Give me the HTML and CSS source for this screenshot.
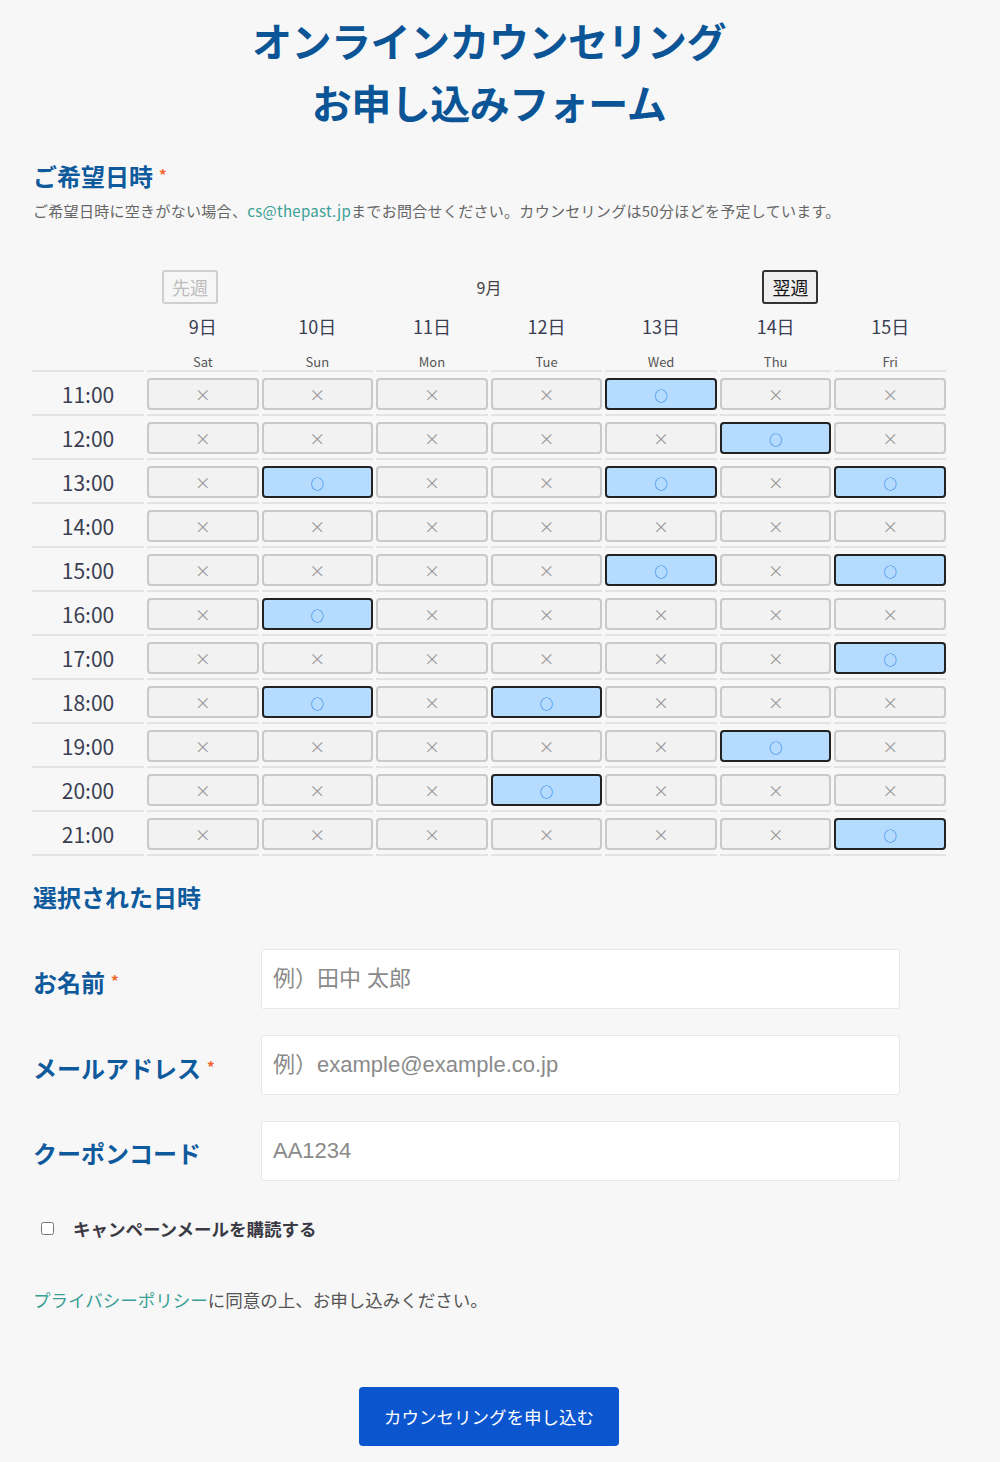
FILE: index.html
```html
<!DOCTYPE html>
<html lang="ja">
<head>
<meta charset="utf-8">
<title>オンラインカウンセリング お申し込みフォーム</title>
<link rel="stylesheet" href="styles.css">
</head>
<body>
<div class="page">
  <h1 class="title">オンラインカウンセリング<br>お申し込みフォーム</h1>

  <h2 class="section-title">ご希望日時<span class="req">*</span></h2>
  <p class="desc">ご希望日時に空きがない場合、<a class="link" href="#">cs@thepast.jp</a>までお問合せください。カウンセリングは50分ほどを予定しています。</p>

  <div class="cal">
    <div class="nav">
      <button class="nav-btn prev" disabled>先週</button>
      <span class="month">9月</span>
      <button class="nav-btn next">翌週</button>
    </div>

    <div class="blank"></div>
    <div class="date">9日</div><div class="date">10日</div><div class="date">11日</div><div class="date">12日</div><div class="date">13日</div><div class="date">14日</div><div class="date">15日</div>

    <div class="wd blank-wd"></div>
    <div class="wd">Sat</div><div class="wd">Sun</div><div class="wd">Mon</div><div class="wd">Tue</div><div class="wd">Wed</div><div class="wd">Thu</div><div class="wd">Fri</div>

    <div class="time">11:00</div>
    <div class="slot"><button class="s no">×</button></div>
    <div class="slot"><button class="s no">×</button></div>
    <div class="slot"><button class="s no">×</button></div>
    <div class="slot"><button class="s no">×</button></div>
    <div class="slot"><button class="s ok">○</button></div>
    <div class="slot"><button class="s no">×</button></div>
    <div class="slot"><button class="s no">×</button></div>

    <div class="time">12:00</div>
    <div class="slot"><button class="s no">×</button></div>
    <div class="slot"><button class="s no">×</button></div>
    <div class="slot"><button class="s no">×</button></div>
    <div class="slot"><button class="s no">×</button></div>
    <div class="slot"><button class="s no">×</button></div>
    <div class="slot"><button class="s ok">○</button></div>
    <div class="slot"><button class="s no">×</button></div>

    <div class="time">13:00</div>
    <div class="slot"><button class="s no">×</button></div>
    <div class="slot"><button class="s ok">○</button></div>
    <div class="slot"><button class="s no">×</button></div>
    <div class="slot"><button class="s no">×</button></div>
    <div class="slot"><button class="s ok">○</button></div>
    <div class="slot"><button class="s no">×</button></div>
    <div class="slot"><button class="s ok">○</button></div>

    <div class="time">14:00</div>
    <div class="slot"><button class="s no">×</button></div>
    <div class="slot"><button class="s no">×</button></div>
    <div class="slot"><button class="s no">×</button></div>
    <div class="slot"><button class="s no">×</button></div>
    <div class="slot"><button class="s no">×</button></div>
    <div class="slot"><button class="s no">×</button></div>
    <div class="slot"><button class="s no">×</button></div>

    <div class="time">15:00</div>
    <div class="slot"><button class="s no">×</button></div>
    <div class="slot"><button class="s no">×</button></div>
    <div class="slot"><button class="s no">×</button></div>
    <div class="slot"><button class="s no">×</button></div>
    <div class="slot"><button class="s ok">○</button></div>
    <div class="slot"><button class="s no">×</button></div>
    <div class="slot"><button class="s ok">○</button></div>

    <div class="time">16:00</div>
    <div class="slot"><button class="s no">×</button></div>
    <div class="slot"><button class="s ok">○</button></div>
    <div class="slot"><button class="s no">×</button></div>
    <div class="slot"><button class="s no">×</button></div>
    <div class="slot"><button class="s no">×</button></div>
    <div class="slot"><button class="s no">×</button></div>
    <div class="slot"><button class="s no">×</button></div>

    <div class="time">17:00</div>
    <div class="slot"><button class="s no">×</button></div>
    <div class="slot"><button class="s no">×</button></div>
    <div class="slot"><button class="s no">×</button></div>
    <div class="slot"><button class="s no">×</button></div>
    <div class="slot"><button class="s no">×</button></div>
    <div class="slot"><button class="s no">×</button></div>
    <div class="slot"><button class="s ok">○</button></div>

    <div class="time">18:00</div>
    <div class="slot"><button class="s no">×</button></div>
    <div class="slot"><button class="s ok">○</button></div>
    <div class="slot"><button class="s no">×</button></div>
    <div class="slot"><button class="s ok">○</button></div>
    <div class="slot"><button class="s no">×</button></div>
    <div class="slot"><button class="s no">×</button></div>
    <div class="slot"><button class="s no">×</button></div>

    <div class="time">19:00</div>
    <div class="slot"><button class="s no">×</button></div>
    <div class="slot"><button class="s no">×</button></div>
    <div class="slot"><button class="s no">×</button></div>
    <div class="slot"><button class="s no">×</button></div>
    <div class="slot"><button class="s no">×</button></div>
    <div class="slot"><button class="s ok">○</button></div>
    <div class="slot"><button class="s no">×</button></div>

    <div class="time">20:00</div>
    <div class="slot"><button class="s no">×</button></div>
    <div class="slot"><button class="s no">×</button></div>
    <div class="slot"><button class="s no">×</button></div>
    <div class="slot"><button class="s ok">○</button></div>
    <div class="slot"><button class="s no">×</button></div>
    <div class="slot"><button class="s no">×</button></div>
    <div class="slot"><button class="s no">×</button></div>

    <div class="time">21:00</div>
    <div class="slot"><button class="s no">×</button></div>
    <div class="slot"><button class="s no">×</button></div>
    <div class="slot"><button class="s no">×</button></div>
    <div class="slot"><button class="s no">×</button></div>
    <div class="slot"><button class="s no">×</button></div>
    <div class="slot"><button class="s no">×</button></div>
    <div class="slot"><button class="s ok">○</button></div>
  </div>

  <h2 class="section-title selected">選択された日時</h2>

  <div class="form">
    <div class="row">
      <label class="label">お名前<span class="req">*</span></label>
      <input class="input" type="text" placeholder="例）田中 太郎">
    </div>
    <div class="row">
      <label class="label">メールアドレス<span class="req">*</span></label>
      <input class="input" type="text" placeholder="例）example@example.co.jp">
    </div>
    <div class="row">
      <label class="label">クーポンコード</label>
      <input class="input" type="text" placeholder="AA1234">
    </div>
  </div>

  <label class="check"><input type="checkbox" class="cb"><span class="check-text">キャンペーンメールを購読する</span></label>

  <p class="privacy"><a class="link" href="#">プライバシーポリシー</a>に同意の上、お申し込みください。</p>

  <div class="submit-wrap">
    <button class="submit">カウンセリングを申し込む</button>
  </div>
</div>
</body>
</html>
```

FILE: styles.css
```css
* { box-sizing: border-box; }

html, body {
  margin: 0;
  padding: 0;
  background: #f7f7f7;
}

body {
  font-family: "Noto Sans CJK JP", "Noto Sans", sans-serif;
  color: #333;
}

.page {
  width: 914px;
  margin-left: 32px;
  padding-top: 9px;
  padding-bottom: 17px;
}

.title {
  margin: 0;
  text-align: center;
  font-size: 40px;
  line-height: 62px;
  font-weight: 700;
  color: #0b5597;
  letter-spacing: -0.5px;
}

.section-title {
  margin: 24px 0 0 1px;
  font-size: 24px;
  line-height: 36px;
  font-weight: 700;
  color: #0f5a9c;
}

.req {
  color: #f2622b;
  font-size: 15px;
  vertical-align: 5px;
  margin-left: 6px;
}

.desc {
  margin: 6px 0 0 1px;
  font-size: 15px;
  letter-spacing: 0.3px;
  line-height: 21px;
  color: #666;
}

.link {
  color: #3a9f96;
  text-decoration: none;
}

/* calendar */
.cal {
  margin-top: 46px;
  display: grid;
  grid-template-columns: 112px repeat(7, 1fr);
  column-gap: 3px;
}

.nav {
  grid-column: 1 / -1;
  display: grid;
  grid-template-columns: 112px repeat(7, 1fr);
  column-gap: 3px;
  height: 40px;
  align-items: center;
}

.nav-btn {
  height: 34px;
  padding: 0 8px;
  font-family: "Noto Sans CJK JP", sans-serif;
  font-size: 18px;
  line-height: 28px;
  border-radius: 3px;
  border: 2px solid #333;
  background: #efefef;
  color: #111;
}

.prev {
  grid-column: 2;
  grid-row: 1;
  justify-self: start;
  margin-left: 15px;
  border-color: #cfcfcf;
  color: #bcbcbc;
  background: #f6f6f6;
}

.next {
  grid-column: 7;
  grid-row: 1;
  justify-self: end;
  margin-right: 13px;
}

.month {
  grid-column: 1 / -1;
  grid-row: 1;
  justify-self: center;
  font-size: 16px;
  color: #444;
}

.date {
  text-align: center;
  font-size: 18px;
  line-height: 38px;
  color: #3a3e52;
}

.wd {
  text-align: center;
  font-size: 13px;
  line-height: 17px;
  padding-top: 8px;
  color: #555;
  border-bottom: 2px solid #e3e3e7;
}

.time {
  display: flex;
  align-items: center;
  justify-content: center;
  font-size: 21px;
  color: #3a3e52;
  border-bottom: 2px solid #e3e3e7;
  padding-top: 2px;
}

.slot {
  padding: 6px 0 4px;
  border-bottom: 2px solid #e3e3e7;
}

.s {
  display: block;
  width: 100%;
  height: 32px;
  border-radius: 4px;
  border: 2px solid #c9c9c9;
  background: #f2f2f2;
  padding: 0;
  font-family: "Noto Sans CJK JP", sans-serif;
  line-height: 26px;
  cursor: pointer;
}

.s.no {
  color: #9a9a9a;
  font-size: 16px;
}

.s.ok {
  background: #b5dcfe;
  border-color: #222;
  color: #2f86e8;
  font-size: 13.5px;
  font-weight: 700;
  padding-top: 1px;
}

/* form */
.selected {
  margin-top: 23px;
}

.form {
  margin-top: 34px;
  display: flex;
  flex-direction: column;
  gap: 26px;
}

.row {
  display: flex;
  align-items: center;
}

.label {
  width: 229px;
  padding-left: 1px;
  margin-top: 4px;
  font-size: 24px;
  line-height: 36px;
  font-weight: 700;
  color: #0f5a9c;
}

.input {
  width: 639px;
  height: 60px;
  padding: 0 11px;
  border: 1px solid #e2e8f0;
  border-radius: 3px;
  background: #fff;
  font-family: "Liberation Sans", "Noto Sans CJK JP", sans-serif;
  font-size: 22px;
  color: #333;
  outline: none;
}

.input::placeholder {
  color: #8a8a8a;
}

.check {
  margin-top: 34px;
  display: flex;
  align-items: center;
  height: 26px;
}

.cb {
  margin: 0 0 0 9px;
  width: 13px;
  height: 13px;
}

.check-text {
  margin-left: 19px;
  font-size: 17.5px;
  font-weight: 700;
  color: #3a3a45;
}

.privacy {
  margin: 46px 0 0 1px;
  font-size: 17.5px;
  line-height: 26px;
  color: #555;
}

.submit-wrap {
  margin-top: 74px;
  display: flex;
  justify-content: center;
}

.submit {
  width: 260px;
  height: 59px;
  border: none;
  border-radius: 4px;
  background: #0b56cf;
  color: #fff;
  font-family: "Noto Sans CJK JP", sans-serif;
  font-size: 17.5px;
}
```
